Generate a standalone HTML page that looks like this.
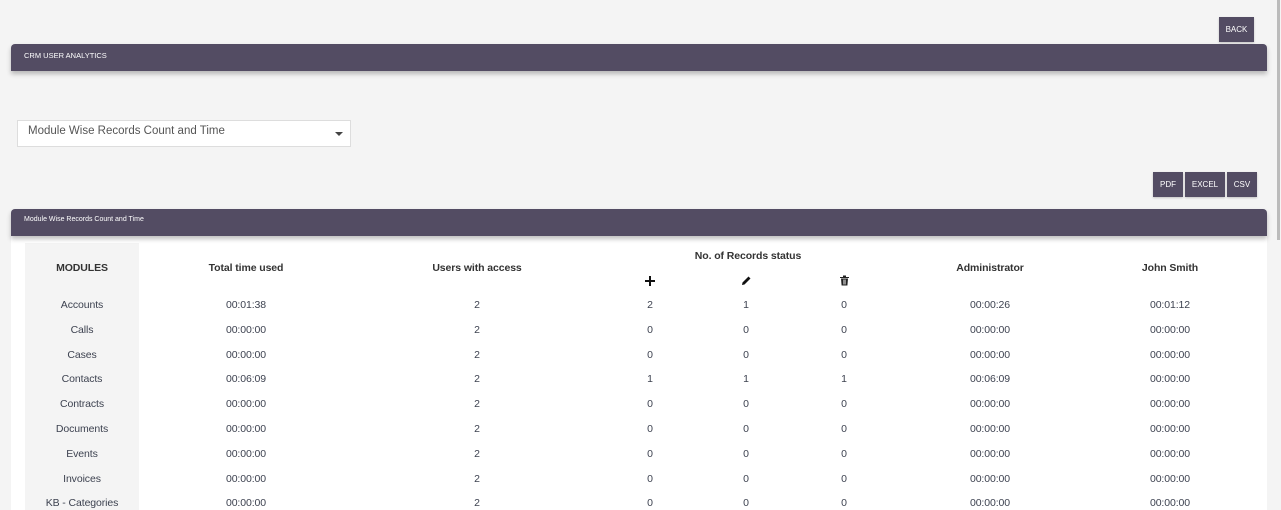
<!DOCTYPE html>
<html><head><style>
*{margin:0;padding:0;box-sizing:border-box}
html,body{width:1281px;height:510px;overflow:hidden}
body{background:#f4f4f4;font-family:"Liberation Sans",Arial,sans-serif;position:relative;color:#333}
.bar{position:absolute;left:11px;width:1256px;background:#534c63;border-radius:4px 4px 0 0;box-shadow:0 3px 5px rgba(0,0,0,.25);color:#fff}
.btn{position:absolute;background:#534c63;color:#fff;font-size:8px;display:flex;align-items:center;justify-content:center;box-shadow:0 1px 2px rgba(0,0,0,.2)}
.row{position:absolute;left:25px;display:flex;height:16px;align-items:center;font-size:10.5px;color:#3d4250;letter-spacing:-0.1px}
.row div{text-align:center}
.h{font-weight:bold;color:#333;font-size:10.5px;position:absolute;text-align:center;letter-spacing:-0.1px}
</style></head><body>
<div class="btn" style="left:1219px;top:17px;width:35px;height:25px">BACK</div>
<div class="bar" style="top:44px;height:27px"><span style="position:absolute;left:13px;top:7px;font-size:7.5px">CRM USER ANALYTICS</span></div>
<div style="position:absolute;left:17px;top:120px;width:334px;height:27px;background:#fff;border:1px solid #ddd;font-size:11.5px;color:#555;padding:4px 0 0 10px">Module Wise Records Count and Time
<svg style="position:absolute;right:7px;top:11px" width="8" height="5"><path d="M0 0H8L4 4Z" fill="#444"/></svg></div>
<div class="btn" style="left:1153px;top:172px;width:30px;height:25px">PDF</div>
<div class="btn" style="left:1185px;top:172px;width:40px;height:25px">EXCEL</div>
<div class="btn" style="left:1227px;top:172px;width:30px;height:25px">CSV</div>
<div style="position:absolute;left:11px;top:230px;width:1256px;height:290px;background:#fff"></div>
<div style="position:absolute;left:25px;top:243px;width:114px;height:280px;background:#f4f4f4"></div>
<div class="bar" style="top:209px;height:27px"><span style="position:absolute;left:13px;top:7px;font-size:7px">Module Wise Records Count and Time</span></div>
<div class="h" style="left:25px;width:114px;top:262px">MODULES</div>
<div class="h" style="left:139px;width:214px;top:262px">Total time used</div>
<div class="h" style="left:353px;width:248px;top:262px">Users with access</div>
<div class="h" style="left:601px;width:294px;top:250px">No. of Records status</div>
<div class="h" style="left:895px;width:190px;top:262px">Administrator</div>
<div class="h" style="left:1085px;width:170px;top:262px">John Smith</div>
<svg style="position:absolute;left:644px;top:275px" width="12" height="12"><path d="M6 1V11M1 6H11" stroke="#111" stroke-width="2"/></svg>
<svg style="position:absolute;left:741px;top:275px" width="11" height="11"><path d="M1 10L1.5 7.5L7.5 1.5L9.5 3.5L3.5 9.5Z" fill="#111"/></svg>
<svg style="position:absolute;left:840px;top:275px" width="9" height="11"><path d="M0 2H9V3H0ZM3 0.5H6V2H3ZM1 3.5H8L7.4 10.5H1.6Z" fill="#222"/><path d="M3.3 4.5V9.5M4.5 4.5V9.5M5.7 4.5V9.5" stroke="#fff" stroke-width=".5"/></svg>
<div style="position:absolute;left:1277px;top:0;width:3px;height:240px;background:#bbb"></div>
<div class="row" style="top:297px"><div style="width:114px">Accounts</div><div style="width:214px">00:01:38</div><div style="width:248px">2</div><div style="width:98px">2</div><div style="width:94px">1</div><div style="width:102px">0</div><div style="width:190px">00:00:26</div><div style="width:170px">00:01:12</div></div>
<div class="row" style="top:322px"><div style="width:114px">Calls</div><div style="width:214px">00:00:00</div><div style="width:248px">2</div><div style="width:98px">0</div><div style="width:94px">0</div><div style="width:102px">0</div><div style="width:190px">00:00:00</div><div style="width:170px">00:00:00</div></div>
<div class="row" style="top:347px"><div style="width:114px">Cases</div><div style="width:214px">00:00:00</div><div style="width:248px">2</div><div style="width:98px">0</div><div style="width:94px">0</div><div style="width:102px">0</div><div style="width:190px">00:00:00</div><div style="width:170px">00:00:00</div></div>
<div class="row" style="top:371px"><div style="width:114px">Contacts</div><div style="width:214px">00:06:09</div><div style="width:248px">2</div><div style="width:98px">1</div><div style="width:94px">1</div><div style="width:102px">1</div><div style="width:190px">00:06:09</div><div style="width:170px">00:00:00</div></div>
<div class="row" style="top:396px"><div style="width:114px">Contracts</div><div style="width:214px">00:00:00</div><div style="width:248px">2</div><div style="width:98px">0</div><div style="width:94px">0</div><div style="width:102px">0</div><div style="width:190px">00:00:00</div><div style="width:170px">00:00:00</div></div>
<div class="row" style="top:421px"><div style="width:114px">Documents</div><div style="width:214px">00:00:00</div><div style="width:248px">2</div><div style="width:98px">0</div><div style="width:94px">0</div><div style="width:102px">0</div><div style="width:190px">00:00:00</div><div style="width:170px">00:00:00</div></div>
<div class="row" style="top:446px"><div style="width:114px">Events</div><div style="width:214px">00:00:00</div><div style="width:248px">2</div><div style="width:98px">0</div><div style="width:94px">0</div><div style="width:102px">0</div><div style="width:190px">00:00:00</div><div style="width:170px">00:00:00</div></div>
<div class="row" style="top:471px"><div style="width:114px">Invoices</div><div style="width:214px">00:00:00</div><div style="width:248px">2</div><div style="width:98px">0</div><div style="width:94px">0</div><div style="width:102px">0</div><div style="width:190px">00:00:00</div><div style="width:170px">00:00:00</div></div>
<div class="row" style="top:495px"><div style="width:114px">KB - Categories</div><div style="width:214px">00:00:00</div><div style="width:248px">2</div><div style="width:98px">0</div><div style="width:94px">0</div><div style="width:102px">0</div><div style="width:190px">00:00:00</div><div style="width:170px">00:00:00</div></div>
</body></html>
